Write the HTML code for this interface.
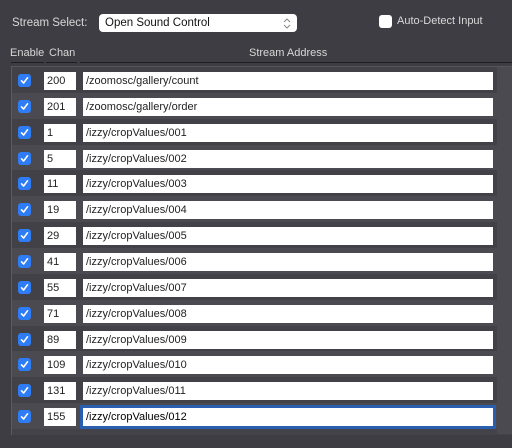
<!DOCTYPE html>
<html><head><style>
body{margin:0;width:512px;height:448px;background:#3e3d43;font-family:"Liberation Sans",sans-serif;color:#ddd;position:relative;overflow:hidden}
.a{position:absolute}
.lbl{font-size:11px;color:#d8d8d8}
.sel{left:99px;top:14px;width:198px;height:18px;background:#fff;border-radius:4px;color:#111;font-size:11.5px;line-height:18px;box-sizing:border-box;padding-left:6px}
.cb{width:13px;height:13px;border-radius:3px;background:#2e7cf6}
.cb svg{display:block}
.f{background:#fff;color:#222;font-size:11px;height:18px;line-height:18px;box-sizing:border-box;padding-left:3px}
.row{left:12px;width:485px;height:26px}
</style></head><body>
<div class="a lbl" style="left:12px;top:17px;font-size:11.5px">Stream Select:</div>
<div class="a sel">Open Sound Control<svg class="a" style="right:6px;top:4px" width="8" height="11" viewBox="0 0 8 11"><path d="M1 4 L4 1 L7 4 M1 7 L4 10 L7 7" stroke="#888" fill="none" stroke-width="1"/></svg></div>
<div class="a" style="left:379px;top:15px;width:13px;height:13px;background:#fff;border-radius:3px"></div>
<div class="a lbl" style="left:397px;top:15px;font-size:11px">Auto-Detect Input</div>
<div class="a lbl" style="left:10px;top:47px">Enable</div>
<div class="a lbl" style="left:49px;top:47px">Chan</div>
<div class="a lbl" style="left:249px;top:47px">Stream Address</div>
<div class="a" style="left:11px;top:62px;width:33px;height:1px;background:#1e1e20"></div>
<div class="a" style="left:46px;top:62px;width:31px;height:1px;background:#1e1e20"></div>
<div class="a" style="left:80px;top:62px;width:432px;height:1px;background:#1e1e20"></div>
<div class="a" style="left:11px;top:66px;width:501px;height:368px;background:#444349;border-left:1px solid #5a5a60;border-top:1px solid #55555a"></div>
<div class="a" style="left:497px;top:67px;width:15px;height:367px;background:#4a4a50"></div>
<div id="rows"></div>
<script>
var d=[["200","/zoomosc/gallery/count"],["201","/zoomosc/gallery/order"]];
for(var i=1;i<=12;i++){var c=[1,5,11,19,29,41,55,71,89,109,131,155][i-1];d.push([c+"","/izzy/cropValues/"+("00"+i).slice(-3)]);}
var h="";
for(var i=0;i<14;i++){var y=67+i*25.85;
h+='<div class="a row" style="top:'+y+'px;background:'+(i%2?'#4b4a50':'#424147')+'"></div>';
h+='<div class="a cb" style="left:18px;top:'+(y+7)+'px"><svg width="13" height="13" viewBox="0 0 13 13"><path d="M3.5 6.8 L5.6 9 L9.5 3.8" stroke="#fff" stroke-width="1.6" fill="none" stroke-linecap="round" stroke-linejoin="round"/></svg></div>';
h+='<div class="a f" style="left:44px;top:'+(y+5)+'px;width:32px">'+d[i][0]+'</div>';
var last=i==13;
h+='<div class="a f" style="left:83px;top:'+(y+5)+'px;width:410px;'+(last?'outline:3px solid #2a5fb0;color:#000;':'')+'">'+d[i][1]+'</div>';}
document.getElementById("rows").innerHTML=h;
</script>
</body></html>
